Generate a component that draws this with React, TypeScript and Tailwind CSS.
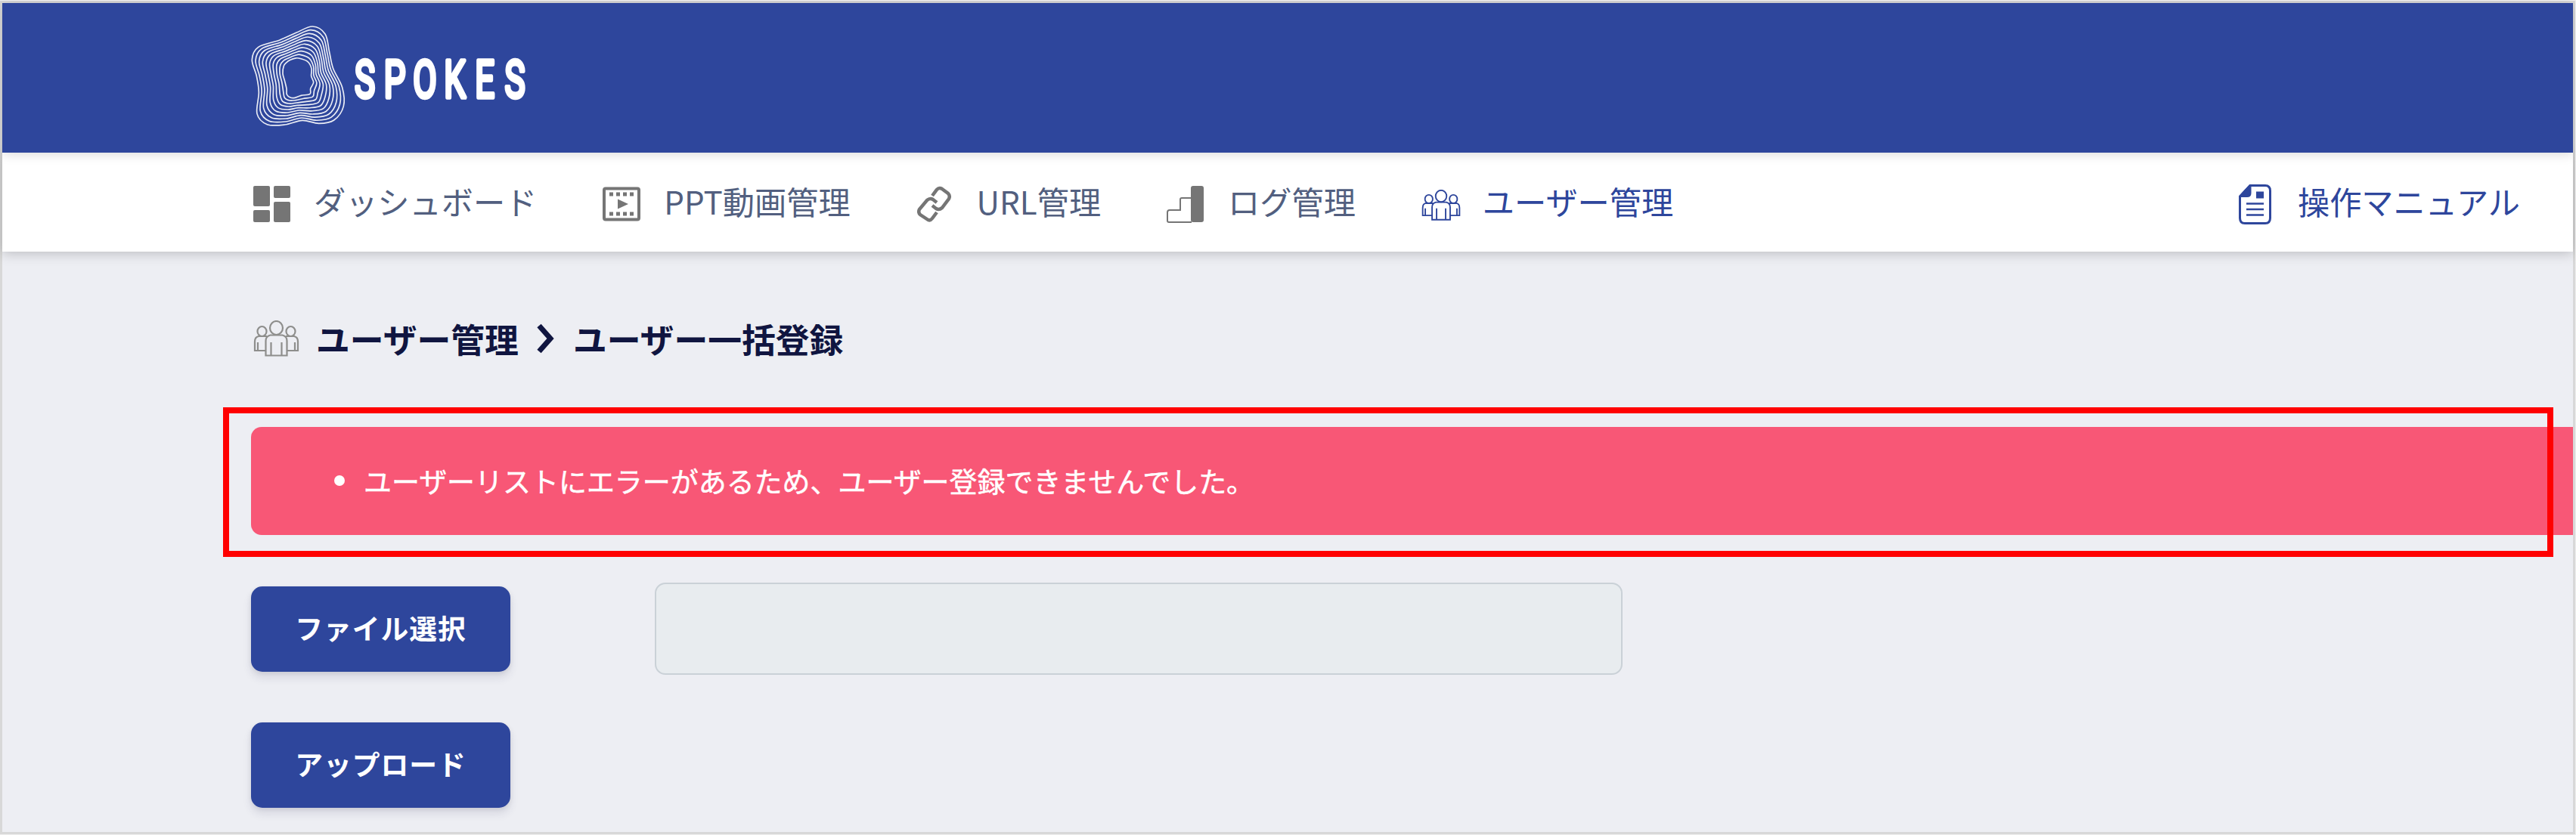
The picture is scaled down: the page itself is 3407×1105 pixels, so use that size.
import type { ReactNode } from "react"

type Point = [number, number]

// logo mark: outer blob and inner head outline, the rings in between are interpolated
const outer: Point[] = [
  [310, 48], [360, 78], [377, 150], [392, 215], [428, 290], [433, 365], [395, 420], [335, 433], [270, 421],
  [200, 438], [130, 437], [90, 395], [97, 310], [88, 245], [70, 180], [95, 130], [180, 102], [245, 73],
]
const inner: Point[] = [
  [255, 174], [290, 187], [306, 215], [305, 245], [314, 270], [302, 295], [300, 316], [265, 322], [240, 331],
  [222, 330], [208, 318], [207, 295], [200, 265], [192, 235], [196, 205], [208, 190], [222, 181], [238, 175],
]
const RINGS = 10

function ringPath(t: number) {
  const pts = outer.map(([x, y], i): Point => [x + (inner[i][0] - x) * t, y + (inner[i][1] - y) * t])
  const n = pts.length
  let d = `M${pts[0][0]} ${pts[0][1]}`
  for (let i = 0; i < n; i++) {
    const [a, b, c, e] = [pts[(i + n - 1) % n], pts[i], pts[(i + 1) % n], pts[(i + 2) % n]]
    d += `C${b[0] + (c[0] - a[0]) / 6} ${b[1] + (c[1] - a[1]) / 6} ${c[0] - (e[0] - b[0]) / 6} ${c[1] - (e[1] - b[1]) / 6} ${c[0]} ${c[1]}`
  }
  return d + "Z"
}

function Logo() {
  return (
    <svg className="w-[370px] h-[140px]" viewBox="0 0 370 140">
      <g transform="translate(-20 -14) scale(.33333)" fill="none" stroke="#fff" strokeOpacity=".9" strokeWidth="5">
        {Array.from({ length: RINGS }, (_, i) => (
          <path key={i} d={ringPath(i / (RINGS - 1))} />
        ))}
      </g>
      <g
        fill="#fff"
        stroke="#fff"
        strokeWidth="5.500"
        strokeLinejoin="round"
        fontFamily="Roboto, sans-serif"
        fontSize="69"
        fontWeight="400"
        textAnchor="middle"
      >
        {"SPOKES".split("").map((c, i) => (
          <text key={i} transform={`translate(${152.5 + i * 39.7} 96) scale(.66 1)`}>{c}</text>
        ))}
      </g>
    </svg>
  )
}

function DashboardIcon() {
  return (
    <svg className="w-[49px] h-[50px]" viewBox="0 0 49 50" fill="#757575">
      <rect x="0" y="1" width="22" height="27" rx="2" />
      <rect x="27" y="1" width="22" height="16" rx="2" />
      <rect x="0" y="33" width="22" height="16" rx="2" />
      <rect x="27" y="22" width="22" height="27" rx="2" />
    </svg>
  )
}

function FilmIcon() {
  return (
    <svg className="w-[50px] h-[50px]" viewBox="0 0 50 50" fill="#757575">
      <rect x="2" y="4.500" width="46" height="41" rx="2" fill="none" stroke="#757575" strokeWidth="4" />
      {[9, 18, 27, 36].map(x => (
        <g key={x}>
          <rect x={x} y="9.500" width="5" height="5" />
          <rect x={x} y="35.500" width="5" height="5" />
        </g>
      ))}
      <path d="M20 18.500l14 6.500-14 6.500z" />
    </svg>
  )
}

function LinkIcon() {
  return (
    <svg className="w-[46px] h-[50px]" viewBox="0 0 46 50" fill="none" stroke="#757575" strokeWidth="4.500">
      <path d="M20 14L26 6Q29 2.500 33 5L41 11Q44 14 42 18L33 30Q29 33.500 25 31L20 27" />
      <path d="M26 36L20 44Q17 48 13 45L4 39Q1 36 3 32L13 20Q17 16.500 21 19L26 23" />
    </svg>
  )
}

function LogIcon() {
  return (
    <svg className="w-[50px] h-[50px]" viewBox="0 0 50 50" fill="none" stroke="#757575" strokeWidth="2">
      <path d="M32 17H20q-2 0-2 2v14H4q-3 0-3 3v11q0 2 2 2h30" />
      <rect x="32" y="1" width="17" height="48" rx="3" fill="#757575" stroke="none" />
    </svg>
  )
}

function UsersIcon({ className }: { className: string }) {
  return (
    <svg className={className} viewBox="0 0 60 48" fill="none" stroke="currentColor" strokeWidth="2.200">
      <ellipse cx="30" cy="10" rx="8.500" ry="9" />
      <path d="M23 46.500V29M37 46.500V29M16 46.500V27q0-6 6-7.500h16q6 1.500 6 7.500v19.500z" />
      <ellipse cx="11" cy="14.500" rx="6" ry="6.500" />
      <ellipse cx="49" cy="14.500" rx="6" ry="6.500" />
      <path d="M16 40H1.500V28q0-6 5-7h11M5.500 40V29M44 40h14.500V28q0-6-5-7h-11M54.500 40V29" />
    </svg>
  )
}

function ManualIcon() {
  return (
    <svg className="w-[43px] h-[53px]" viewBox="0 0 43 53" fill="none" stroke="#2e469c" strokeWidth="3">
      <path d="M15 1.500h20q6.500 0 6.500 7v36q0 7-6.500 7H8q-6.500 0-6.500-7V16z" />
      <path d="M15 1.500v10q0 4-4 4H2z" fill="#2e469c" />
      <path d="M23 9.500h10v9H23z" fill="#2e469c" stroke="none" />
      <path d="M10 25.500h23M10 33h23M10 40.500h23" strokeWidth="2.500" />
    </svg>
  )
}

function NavItem({ icon, label, className }: { icon: ReactNode; label: string; className: string }) {
  return (
    <a href="#" className={`flex items-center whitespace-nowrap ${className}`}>
      {icon}
      <span className="-mt-2.5">{label}</span>
    </a>
  )
}

export default function App() {
  return (
    <div className="relative w-[3407px] h-[1105px] overflow-hidden border-t border-r border-b border-[#eeeeee] font-['Noto_Sans_CJK_JP',sans-serif]">
      <div className="flex flex-col h-full border-3 border-[#d8d8d8] bg-[#edeef3]">
        <header className="relative z-20 flex h-[198px] shrink-0 items-center bg-[#2e469c] pl-[327px] shadow-[0_2px_14px_rgba(0,0,0,0.15)]">
          <Logo />
        </header>

        <nav className="relative z-10 flex h-[131px] shrink-0 items-center bg-white pl-[332px] pr-[70px] pt-1.5 text-[42.2px] text-[#525f7f] shadow-[0_2px_16px_rgba(0,0,0,0.22)]">
          <NavItem icon={<DashboardIcon />} label="ダッシュボード" className="gap-[31px]" />
          <NavItem icon={<FilmIcon />} label="PPT動画管理" className="ml-[87px] gap-[31px]" />
          <NavItem icon={<LinkIcon />} label="URL管理" className="ml-[88px] gap-[33px]" />
          <NavItem icon={<LogIcon />} label="ログ管理" className="ml-[87px] gap-[31px]" />
          <NavItem icon={<UsersIcon className="w-[52px] h-[41px] mt-0.5" />} label="ユーザー管理" className="ml-[87px] gap-[29px] text-[#2e469c]" />
          <NavItem icon={<ManualIcon />} label="操作マニュアル" className="ml-auto gap-[35px] text-[#2e469c]" />
        </nav>

        <main className="flex flex-col pl-[329px]">
          <h1 className="flex h-[76px] mt-[77px] items-center text-[44.8px] font-bold text-[#101540] whitespace-nowrap">
            <UsersIcon className="w-[61px] h-[48px] ml-[3px] mr-[22px] text-[#8e8e8c]" />
            <span>ユーザー管理</span>
            <svg className="w-[26px] h-[40px] mx-[23px]" viewBox="0 0 26 40" fill="none" stroke="currentColor" strokeWidth="7">
              <path d="M4 3l15 17L4 37" />
            </svg>
            <span>ユーザー一括登録</span>
          </h1>

          <div className="flex h-[143px] mt-[79px] items-center rounded-l-[14px] bg-[#f85776] pl-[110px] text-[36.96px] text-white">
            <ul>
              <li className="flex items-center gap-[25px] [-webkit-text-stroke:0.5px_white]">
                <span className="size-[14px] rounded-full bg-white" />
                ユーザーリストにエラーがあるため、ユーザー登録できませんでした。
              </li>
            </ul>
          </div>

          <div className="flex mt-[63px] items-center">
            <button className="w-[343px] h-[113px] rounded-[15px] bg-[#2e469c] pb-0.5 text-[36.8px] font-bold tracking-[0.025em] text-white shadow-[0_8px_12px_rgba(50,50,93,0.11),0_2px_6px_rgba(0,0,0,0.08)]">
              ファイル選択
            </button>
            <input
              readOnly
              className="ml-[191px] w-[1280px] h-[122px] rounded-[14px] border-2 border-[#cad1d7] bg-[#e8ecef]"
            />
          </div>
          <button className="mt-[63px] w-[343px] h-[113px] rounded-[15px] bg-[#2e469c] pb-1 text-[36.8px] font-bold tracking-[0.025em] text-white shadow-[0_8px_12px_rgba(50,50,93,0.11),0_2px_6px_rgba(0,0,0,0.08)]">
            アップロード
          </button>
        </main>
      </div>

      {/* highlight frame over the alert */}
      <div className="absolute left-[295px] top-[538px] w-[3082px] h-[198px] border-8 border-[#ff0000]" />
    </div>
  )
}
